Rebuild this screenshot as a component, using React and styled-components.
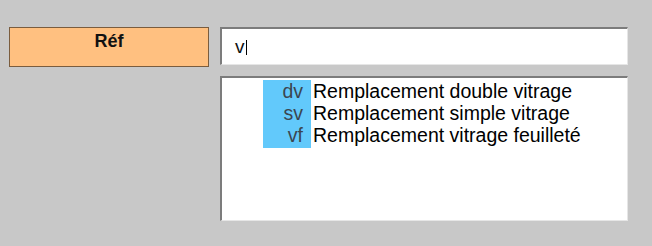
import React from 'react';
import styled, { createGlobalStyle } from 'styled-components';

const GlobalStyle = createGlobalStyle`
  html, body {
    margin: 0;
    padding: 0;
    background: #c8c8c8;
  }
  body {
    font-family: "Liberation Sans", Arial, sans-serif;
  }
`;

const Page = styled.div`
  width: 652px;
  height: 246px;
  box-sizing: border-box;
  padding: 27px 0 0 9px;
  display: grid;
  grid-template-columns: 200px 408px;
  grid-template-rows: 38px 145px;
  column-gap: 11px;
  row-gap: 11px;
  align-items: start;
`;

const Label = styled.div`
  height: 40px;
  box-sizing: border-box;
  background: #ffc080;
  border: 1px solid #7a5c3e;
  color: #111;
  font-weight: bold;
  font-size: 18px;
  text-align: center;
  padding-top: 3px;
`;

const sunken = `
  box-sizing: border-box;
  background: #fff;
  border-style: solid;
  border-width: 2px 1px 1px 2px;
  border-color: #7c7c7c #e6e6e6 #e6e6e6 #7c7c7c;
`;

const Field = styled.div`
  ${sunken}
  height: 38px;
  display: flex;
  align-items: center;
  padding-left: 13px;
  font-size: 19px;
  color: #111;
`;

const Caret = styled.span`
  display: inline-block;
  width: 1px;
  height: 15px;
  background: #000;
  margin-left: 1px;
  margin-top: 2px;
`;

const List = styled.div`
  ${sunken}
  height: 145px;
  padding: 2px 0 0 41px;
`;

const Options = styled.div`
  display: grid;
  grid-template-columns: 48px auto;
  justify-content: start;
`;

const Code = styled.div`
  background: #62c9fb;
  color: #3b4650;
  font-size: 19.5px;
  line-height: 22px;
  text-align: right;
  padding-right: 8px;
  padding-bottom: ${p => (p.$last ? '2px' : '0')};
`;

const Text = styled.div`
  color: #000;
  font-size: 19.5px;
  line-height: 22px;
  padding-left: 2px;
`;

const items = [
  ['dv', 'Remplacement double vitrage'],
  ['sv', 'Remplacement simple vitrage'],
  ['vf', 'Remplacement vitrage feuilleté'],
];

export default function App() {
  return (
    <>
      <GlobalStyle />
      <Page>
        <Label>Réf</Label>
        <Field>
          v<Caret />
        </Field>
        <div />
        <List>
          <Options>
            {items.map(([code, text], i) => (
              <React.Fragment key={code}>
                <Code $last={i === items.length - 1}>{code}</Code>
                <Text>{text}</Text>
              </React.Fragment>
            ))}
          </Options>
        </List>
      </Page>
    </>
  );
}
